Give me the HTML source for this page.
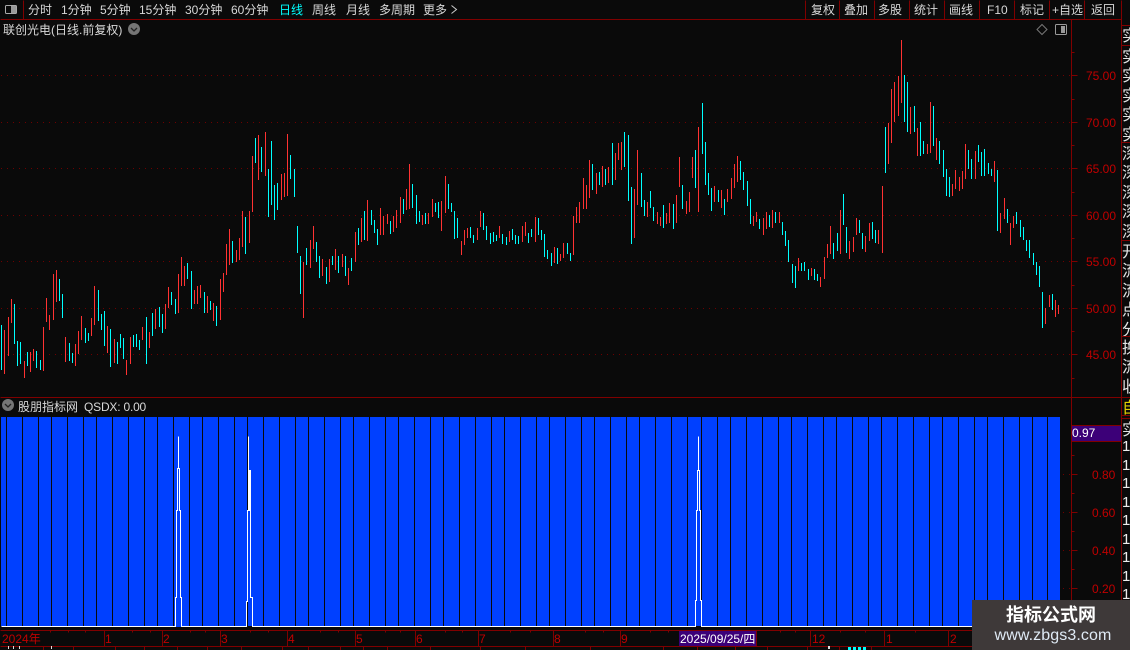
<!DOCTYPE html>
<html>
<head>
<meta charset="utf-8">
<style>
html,body{margin:0;padding:0;background:#0a0a0a;width:1130px;height:650px;overflow:hidden}
svg{position:absolute;left:0;top:0}
text{font-family:"Liberation Sans","WenQuanYi Zen Hei","Noto Sans CJK SC",sans-serif;font-size:12px}
.t text{fill:#d8d8d8}
.y text{fill:#c00000}
.strip{position:absolute;left:1122px;width:8px;overflow:hidden;white-space:nowrap;color:#e4e4e4;font-family:"WenQuanYi Zen Hei","Noto Sans CJK SC",sans-serif;font-size:16px;line-height:19.4px}
#wm{position:absolute;left:972px;top:600px;width:158px;height:50px;background:#3e3939;text-align:center;color:#fff;font-family:"Liberation Sans","Noto Sans CJK SC",sans-serif}
#wm div:first-child{font-size:18px;font-weight:bold;line-height:20px;margin-top:5px;padding-left:0}
#wm div:last-child{font-size:16px;line-height:20px;margin-top:1px;color:#dfeaf5;padding-left:4px;letter-spacing:.1px}
</style>
</head>
<body>
<svg width="1130" height="650" viewBox="0 0 1130 650" xmlns="http://www.w3.org/2000/svg">
<!-- grid dots -->
<g stroke="#6e0000" stroke-dasharray="1 5" shape-rendering="crispEdges">
<path d="M1 75.5H1071M1 122.5H1071M1 168.5H1071M1 215.5H1071M1 261.5H1071M1 308.5H1071M1 354.5H1071M1 474.5H1071M1 512.5H1071M1 550.5H1071M1 588.5H1071"/>
</g>
<!-- frame lines -->
<g stroke="#800000" fill="none" shape-rendering="crispEdges" transform="translate(.5,.5)">
<path d="M0 19H1121M23 0V19M805 0V19M839 0V19M874 0V19M909 0V19M944 0V19M979 0V19M1014 0V19M1049 0V19M1084 0V19M1121 0V630"/>
<path d="M1071 19V630M0 397H1130M1121 25H1130M1121 45H1130M1121 142H1130M1121 240H1130M1121 336H1130M1121 415H1130M1121 418H1130"/>
<path d="M1071 75H1077M1071 122H1077M1071 168H1077M1071 215H1077M1071 261H1077M1071 308H1077M1071 354H1077M1071 99H1074M1071 145H1074M1071 192H1074M1071 238H1074M1071 285H1074M1071 331H1074M1071 52H1074M1071 378H1074"/>
<path d="M1071 474H1077M1071 512H1077M1071 550H1077M1071 588H1077M1071 455H1074M1071 493H1074M1071 531H1074M1071 569H1074M1071 607H1074"/>
<path d="M0 630H1130M0 646H1130M104 630V646M162 630V646M220 630V646M287 630V646M355 630V646M415 630V646M478 630V646M553 630V646M620 630V646M756 630V646M810 630V646M884 630V646M948 630V646"/>
<path d="M50 630V632M68 630V632M85 630V632M132 630V632M150 630V632M190 630V632M205 630V632M250 630V632M268 630V632M320 630V632M338 630V632M385 630V632M400 630V632M445 630V632M462 630V632M510 630V632M530 630V632M585 630V632M603 630V632M650 630V632M668 630V632M780 630V632M795 630V632M840 630V632M865 630V632M915 630V632"/>
<path d="M43 646V650M73 646V650M115 646V650M144 646V650M177 646V650M207 646V650M241 646V650M282 646V650M308 646V650M340 646V650M363 646V650M387 646V650M430 646V650M480 646V650M525 646V650M590 646V650M663 646V650M697 646V650M735 646V650M767 646V650M807 646V650M839 646V650M871 646V650"/>
</g>
<!-- candles -->
<g fill="none" stroke-width="3" shape-rendering="crispEdges">
<g transform="translate(.1667,120) scale(.33333)">
<path stroke="#ff3232" d="M13 630V762M25 591V708M34 537V609M73 723V774M91 696V756M100 687V723M130 621V753M139 534V606M148 585V630M160 462V600M169 450V546M196 651V726M226 672V738M235 633V702M244 588V660M274 594V648M283 498V615M322 618V699M343 657V729M379 720V765M391 651V732M427 621V660M448 636V684M466 567V627M496 552V627M505 501V564M535 462V579M544 411V498M553 438V498M583 510V552M592 498V552M601 495V534M622 528V579M640 549V603M661 477V600M670 459V516M679 372V465M688 327V435M709 390V426M718 354V420M727 273V381M748 273V369M757 108V276M775 45V180M796 36V168M844 162V240M853 159V231M862 42V228"/>
<path stroke="#00ffff" d="M4 615V750M43 552V672M52 663V738M61 666V732M82 696V738M109 693V744M121 720V750M178 477V543M187 522V594M208 669V723M217 699V729M256 624V669M265 639V663M295 510V603M304 582V630M313 573V678M331 627V741M352 666V732M361 642V684M370 654V717M400 645V681M409 642V681M418 660V690M439 591V732M457 579V648M478 561V621M487 582V639M514 516V555M526 537V582M562 429V477M574 453V567M613 516V579M631 543V570M649 558V618M697 363V429M736 291V402M766 54V129M784 81V156M805 147V291M814 63V255M823 195V300M832 189V270M871 105V177M883 147V231M892 318V399"/>
</g>
<g transform="translate(300.1667,120) scale(.33333)">
<path stroke="#ff3232" d="M10 426V594M31 360V444M40 318V387M67 417V468M88 417V486M106 387V450M127 402V441M145 444V495M166 336V426M184 294V366M202 240V363M241 264V345M250 288V345M262 282V312M280 288V336M289 270V324M301 231V309M319 207V270M328 132V267M367 285V315M385 279V312M397 237V291M424 243V333M436 168V279M484 363V405M493 330V375M502 324V354M532 324V360M541 273V321M598 318V354M628 333V366M667 318V366M676 306V348M706 291V366M763 381V429M781 402V423M790 369V414M820 288V405M829 261V309M838 246V309M850 174V267M859 195V267M868 120V234M889 159V222"/>
<path stroke="#00ffff" d="M1 408V522M19 384V435M49 366V426M58 408V474M79 441V492M97 408V435M115 408V459M136 408V468M154 414V453M175 324V375M193 273V360M214 270V315M223 300V339M232 327V375M271 303V342M310 237V282M337 192V264M349 225V312M358 273V306M376 279V312M406 249V276M415 246V294M445 192V267M454 249V276M463 273V357M472 294V354M511 321V354M520 345V369M550 279V330M559 318V360M571 339V372M580 336V366M589 345V363M607 342V372M619 351V375M637 327V360M646 345V372M655 348V372M685 339V369M694 327V351M715 294V345M724 330V360M733 342V411M742 390V417M754 399V438M772 384V432M802 369V402M811 399V423M877 132V210M898 156V195"/>
</g>
<g transform="translate(600.1667,90) scale(.33333)">
<path stroke="#ff3232" d="M7 228V291M25 231V279M46 189V270M55 159V210M64 156V240M103 297V444M112 180V345M142 336V381M172 366V402M181 381V408M199 369V402M208 339V399M229 315V399M238 201V291M259 333V372M268 306V366M277 201V264M295 111V366M343 288V336M364 300V354M382 297V336M394 264V327M403 222V294M412 198V276M460 378V408M469 366V396M490 384V435M499 366V417M517 360V414M538 366V399M595 504V543M634 534V558M661 561V591M673 501V567M682 462V504M691 408V492M721 360V492M748 453V507M760 441V486M769 384V435M796 438V486M808 399V453M835 420V462M847 288V489"/>
<path stroke="#00ffff" d="M16 237V285M37 159V285M73 126V231M85 135V333M94 291V462M124 249V351M133 330V378M151 303V354M160 351V393M190 345V414M220 342V417M247 285V357M286 180V294M307 39V192M316 156V285M325 249V315M334 294V363M355 300V336M373 327V375M421 213V270M430 246V300M442 273V348M451 327V402M478 387V417M508 375V411M526 366V399M547 396V435M556 423V468M565 450V516M577 522V579M586 528V594M604 519V543M613 516V543M625 537V570M643 537V570M652 552V573M700 459V507M712 429V483M730 312V405M739 411V489M778 390V429M787 429V477M817 396V447M826 420V459"/>
</g>
<g transform="translate(860.1667,30) scale(.33333)">
<path stroke="#ff3232" d="M85 279V402M94 177V339M103 156V276M115 138V258M124 30V219M151 231V312M172 294V378M202 342V372M211 216V369M229 324V390M277 462V498M286 420V477M298 441V483M307 423V477M316 342V447M346 363V447M403 393V456M421 549V609M433 504V567M451 579V645M460 558V594M556 834V882M568 795V831M586 810V861M595 825V852"/>
<path stroke="#00ffff" d="M76 291V429M133 135V276M142 156V306M163 228V306M181 276V378M190 333V372M220 228V348M238 333V402M250 360V441M259 417V498M268 441V501M325 360V417M334 387V447M355 345V396M364 366V438M373 357V438M385 399V432M394 417V438M412 420V603M442 537V579M469 546V582M481 570V621M490 591V630M499 630V663M508 630V684M520 669V705M529 696V735M538 708V771M547 786V894M577 792V840"/>
</g>
</g>
<!-- blue indicator -->
<rect x="1" y="417" width="1059" height="209" fill="#0040ff" shape-rendering="crispEdges"/>
<path transform="translate(.5,0)" stroke="#0a0a0a" fill="none" shape-rendering="crispEdges" d="M6 417V626M22 417V626M38 417V626M51 417V626M67 417V626M83 417V626M96 417V626M112 417V626M128 417V626M144 417V626M157 417V626M173 417V626M189 417V626M202 417V626M218 417V626M234 417V626M247 417V626M263 417V626M279 417V626M295 417V626M308 417V626M324 417V626M340 417V626M353 417V626M369 417V626M385 417V626M398 417V626M414 417V626M430 417V626M443 417V626M459 417V626M475 417V626M491 417V626M504 417V626M520 417V626M536 417V626M549 417V626M565 417V626M581 417V626M594 417V626M610 417V626M626 417V626M639 417V626M655 417V626M671 417V626M687 417V626M701 417V626M717 417V626M730 417V626M746 417V626M762 417V626M778 417V626M791 417V626M807 417V626M823 417V626M836 417V626M852 417V626M868 417V626M881 417V626M897 417V626M913 417V626M929 417V626M942 417V626M958 417V626M974 417V626M987 417V626M1003 417V626M1019 417V626M1032 417V626M1047 417V626"/>
<rect x="176" y="600" width="5" height="27" fill="#0040ff"/>
<rect x="176" y="627" width="5" height="3" fill="#0a0a0a"/>
<rect x="247" y="627" width="5" height="3" fill="#0a0a0a"/>
<rect x="696" y="627" width="5" height="3" fill="#0a0a0a"/>
<g fill="none" stroke="#fff" shape-rendering="crispEdges" transform="translate(.5,.5)">
<path d="M1 626H175V597H176V510H177V468H178V436V468H179V510H180V597H181V626H246V601H247V510H248V436V510H249V470H250V597H252V626H695V600H696V510H697V470H698V436V470H699V510H700V600H701V626H1060"/>
</g>
<!-- purple boxes -->
<rect x="1072" y="425" width="49" height="16" fill="#3c0078"/>
<path d="M1072 425.5H1121M1072 441.5H1121" stroke="#800000"/>
<rect x="679" y="631" width="77" height="15" fill="#3c0078"/>
<!-- toolbar left -->
<rect x="5.5" y="5.5" width="11" height="8" rx="1" fill="none" stroke="#aaa"/>
<rect x="11" y="6" width="5" height="7" fill="#999"/>
<g class="t">
<text x="28" y="14">分时</text>
<text x="61" y="14">1分钟</text>
<text x="100" y="14">5分钟</text>
<text x="139" y="14">15分钟</text>
<text x="185" y="14">30分钟</text>
<text x="231" y="14">60分钟</text>
<text x="279" y="14" style="fill:#00ffff">日线</text>
<text x="312" y="14">周线</text>
<text x="346" y="14">月线</text>
<text x="379" y="14">多周期</text>
<text x="423" y="14">更多</text>
<path d="M451.5 5.5L456.5 9.5L451.5 13.5" fill="none" stroke="#ccc"/>
<text x="811" y="14">复权</text>
<text x="844" y="14">叠加</text>
<text x="878" y="14">多股</text>
<text x="914" y="14">统计</text>
<text x="949" y="14">画线</text>
<text x="987" y="14">F10</text>
<text x="1020" y="14">标记</text>
<text x="1052" y="14">+自选</text>
<text x="1091" y="14">返回</text>
<text x="3" y="34">联创光电(日线.前复权)</text>
<text x="18" y="411">股朋指标网</text>
<text x="84" y="411" style="letter-spacing:-.2px">QSDX: 0.00</text>
<text x="1072" y="437" style="fill:#fff">0.97</text>
<text x="680" y="643" style="fill:#fff">2025/09/25/四</text>
</g>
<!-- circles -->
<circle cx="134" cy="29" r="6" fill="#757575"/>
<path d="M131 28L134 31L137 28" fill="none" stroke="#222" stroke-width="1.3"/>
<circle cx="8" cy="405" r="6" fill="#757575"/>
<path d="M5 404L8 407L11 404" fill="none" stroke="#222" stroke-width="1.3"/>
<!-- top right icons -->
<path d="M1042 24.5L1047 29.5L1042 34.5L1037 29.5Z" fill="none" stroke="#777"/>
<rect x="1055.5" y="24.5" width="11" height="10" rx="1" fill="none" stroke="#999"/>
<rect x="1061" y="26" width="4" height="7" fill="#999"/>
<!-- axis labels -->
<g class="y">
<text x="1086" y="80">75.00</text>
<text x="1086" y="127">70.00</text>
<text x="1086" y="173">65.00</text>
<text x="1086" y="220">60.00</text>
<text x="1086" y="266">55.00</text>
<text x="1086" y="313">50.00</text>
<text x="1086" y="359">45.00</text>
<text x="1092" y="479">0.80</text>
<text x="1092" y="517">0.60</text>
<text x="1092" y="555">0.40</text>
<text x="1092" y="593">0.20</text>
<text x="2" y="643">2024年</text>
<text x="105" y="643">1</text>
<text x="163" y="643">2</text>
<text x="221" y="643">3</text>
<text x="288" y="643">4</text>
<text x="356" y="643">5</text>
<text x="416" y="643">6</text>
<text x="479" y="643">7</text>
<text x="554" y="643">8</text>
<text x="621" y="643">9</text>
<text x="812" y="643">12</text>
<text x="886" y="643">1</text>
<text x="950" y="643">2</text>
</g>
<!-- bottom clipped row bits -->
<path d="M8 647.5H9M13 647.5H14M19 647.5H20M51 647.5H52M828 647.5H830" stroke="#ddd" stroke-width="3" shape-rendering="crispEdges"/>
<path d="M848 648.5H866" stroke="#00ffff" stroke-width="3" stroke-dasharray="3 2" shape-rendering="crispEdges"/>
</svg>

<div class="strip" style="top:25px;height:20px;line-height:19px">实</div>
<div class="strip" style="top:46px;height:96px">实<br>实<br>实<br>实<br>实</div>
<div class="strip" style="top:143px;height:97px">深<br>深<br>深<br>深<br>深</div>
<div class="strip" style="top:241px;height:95px">开<br>流<br>流<br>点<br>分</div>
<div class="strip" style="top:337px;height:60px">换<br>流<br>收</div>
<div class="strip" style="top:398px;height:17px;color:#e0d000;line-height:17px">自</div>
<div class="strip" style="top:419px;height:20px;line-height:19px">实</div>
<div class="strip" style="top:438px;height:165px;font-family:'Liberation Sans',sans-serif;font-size:15px;line-height:18.5px;color:#eee">1<br>1<br>1<br>1<br>1<br>1<br>1<br>1<br>1</div>

<div id="wm"><div>指标公式网</div><div>www.zbgs3.com</div></div>
</body>
</html>
